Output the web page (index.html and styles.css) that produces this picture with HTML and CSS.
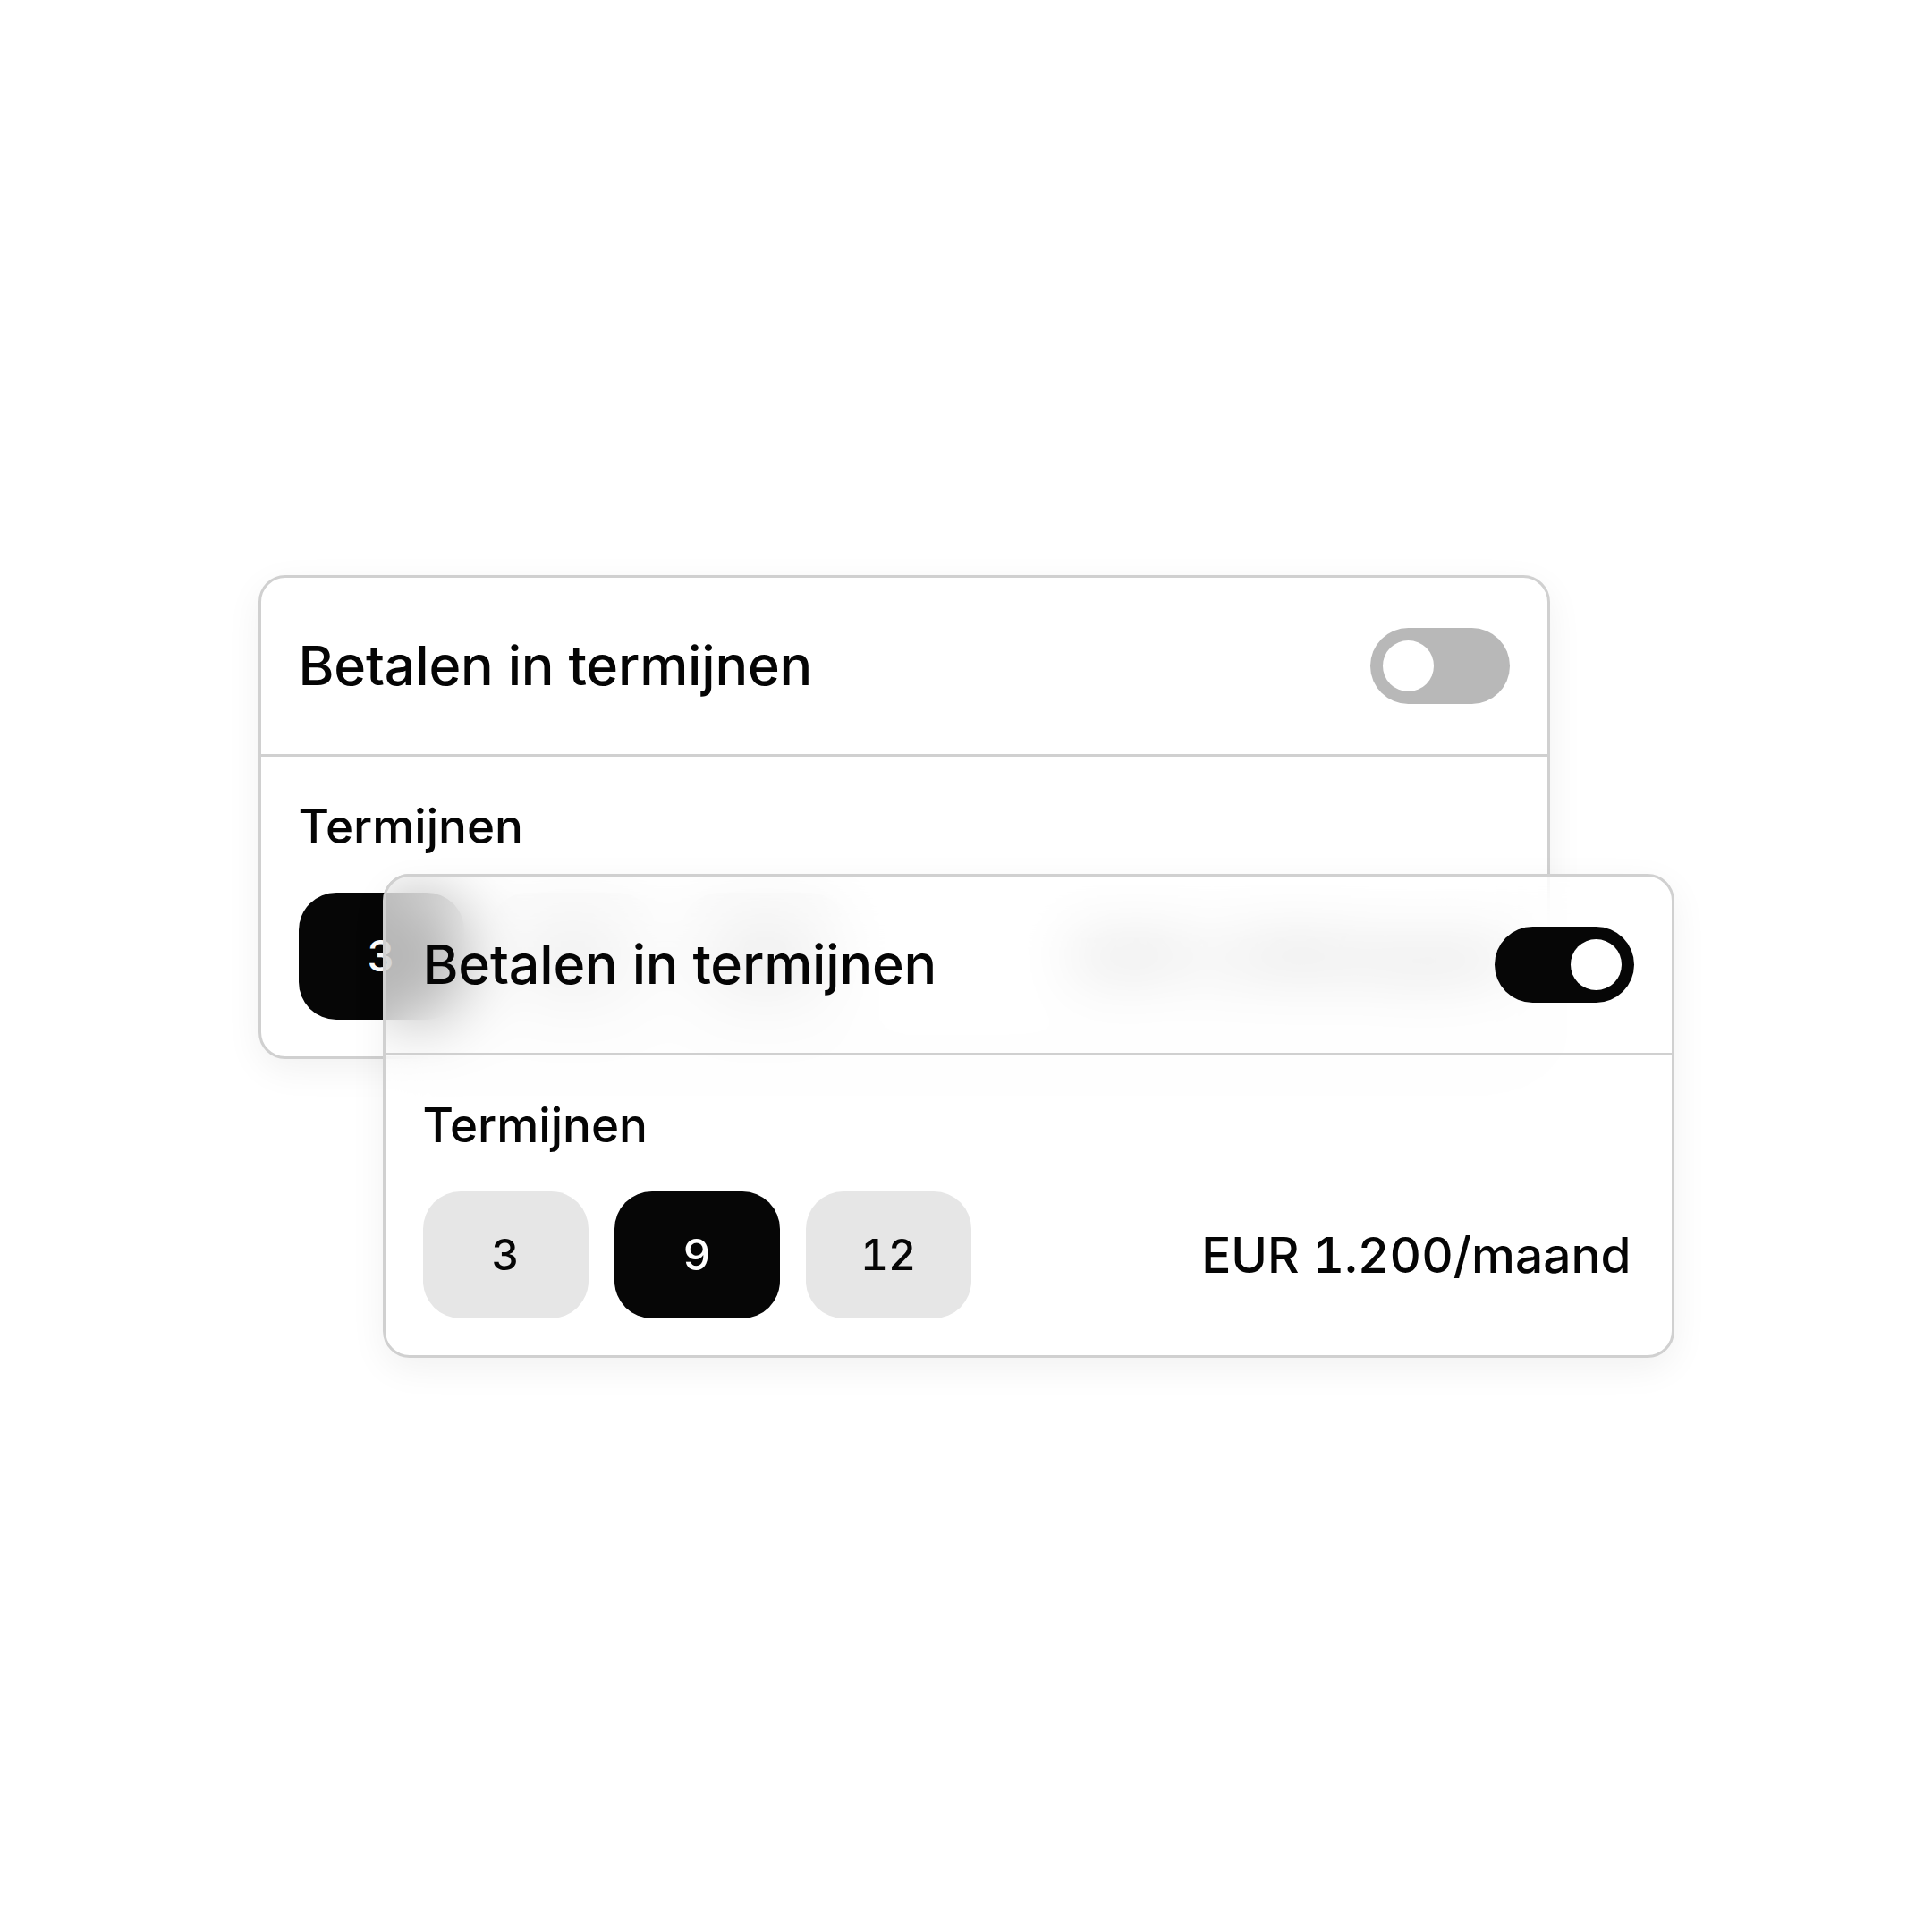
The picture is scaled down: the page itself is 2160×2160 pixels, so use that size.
FILE: index.html
```html
<!DOCTYPE html>
<html lang="nl">
<head>
  <meta charset="UTF-8" />
  <title>Betalen in termijnen</title>
  <link rel="stylesheet" href="styles.css">
</head>
<body>
  <main class="page">
    <div class="stack">

      <!-- toggle off -->
      <section class="card">
        <div class="card-head">
          <h2 class="title">Betalen in termijnen</h2>
          <span class="toggle"><span class="knob"></span></span>
        </div>
        <div class="card-body">
          <p class="label">Termijnen</p>
          <div class="row">
            <div class="terms">
              <button class="term selected">3</button>
              <button class="term">9</button>
              <button class="term">12</button>
            </div>
            <span class="price">EUR 1.200/maand</span>
          </div>
        </div>
      </section>

      <!-- toggle on, frosted card on top -->
      <section class="card card-front">
        <div class="card-head">
          <h2 class="title">Betalen in termijnen</h2>
          <span class="toggle on"><span class="knob"></span></span>
        </div>
        <div class="card-body">
          <p class="label">Termijnen</p>
          <div class="row">
            <div class="terms">
              <button class="term">3</button>
              <button class="term selected">9</button>
              <button class="term">12</button>
            </div>
            <span class="price">EUR 1.200/maand</span>
          </div>
        </div>
      </section>

    </div>
  </main>
</body>
</html>
```

FILE: styles.css
```css
body {
  margin: 0;
  background: #fff;
  font-family: Inter, "Liberation Sans", sans-serif;
  color: #050505;
}

.page {
  min-height: 100vh;
  display: grid;
  place-items: center;
}

.stack {
  display: grid;
}

.card {
  grid-area: 1 / 1;
  align-self: start;
  justify-self: start;
  width: 1444px;
  box-sizing: border-box;
  background: #fff;
  border: 3px solid #d0d0d0;
  border-radius: 30px;
  box-shadow: 0 12px 40px rgba(0, 0, 0, 0.06);
  overflow: hidden;
}

.card-front {
  margin: 334px 0 0 139px;
  background: rgba(255, 255, 255, 0.7);
  backdrop-filter: blur(34px);
}

.card-head {
  display: flex;
  align-items: center;
  justify-content: space-between;
  padding: 56px 42px;
  border-bottom: 3px solid #d0d0d0;
}

.title {
  margin: 0;
  font-size: 61px;
  font-weight: 450;
  line-height: 1;
  letter-spacing: -0.2px;
}

.toggle {
  display: flex;
  width: 156px;
  height: 85px;
  box-sizing: border-box;
  padding: 14px;
  border-radius: 43px;
  background: #b8b8b8;
}

.toggle.on {
  justify-content: flex-end;
  background: #060606;
}

.knob {
  width: 57px;
  height: 57px;
  border-radius: 50%;
  background: #fff;
}

.card-body {
  padding: 47px 42px 41px;
}

.label {
  margin: 0 0 43px;
  font-size: 53px;
  font-weight: 450;
  line-height: 62px;
}

.row {
  display: flex;
  align-items: center;
  justify-content: space-between;
}

.terms {
  display: flex;
  gap: 29px;
}

.term {
  width: 185px;
  height: 142px;
  border: none;
  border-radius: 42px;
  background: #e6e6e6;
  color: #050505;
  font-family: inherit;
  font-size: 48px;
  font-weight: 450;
  font-variant-numeric: tabular-nums;
}

.term.selected {
  background: #060606;
  color: #fff;
}

.price {
  padding-right: 3px;
  font-size: 55px;
  font-weight: 450;
  font-variant-numeric: tabular-nums;
}
```
